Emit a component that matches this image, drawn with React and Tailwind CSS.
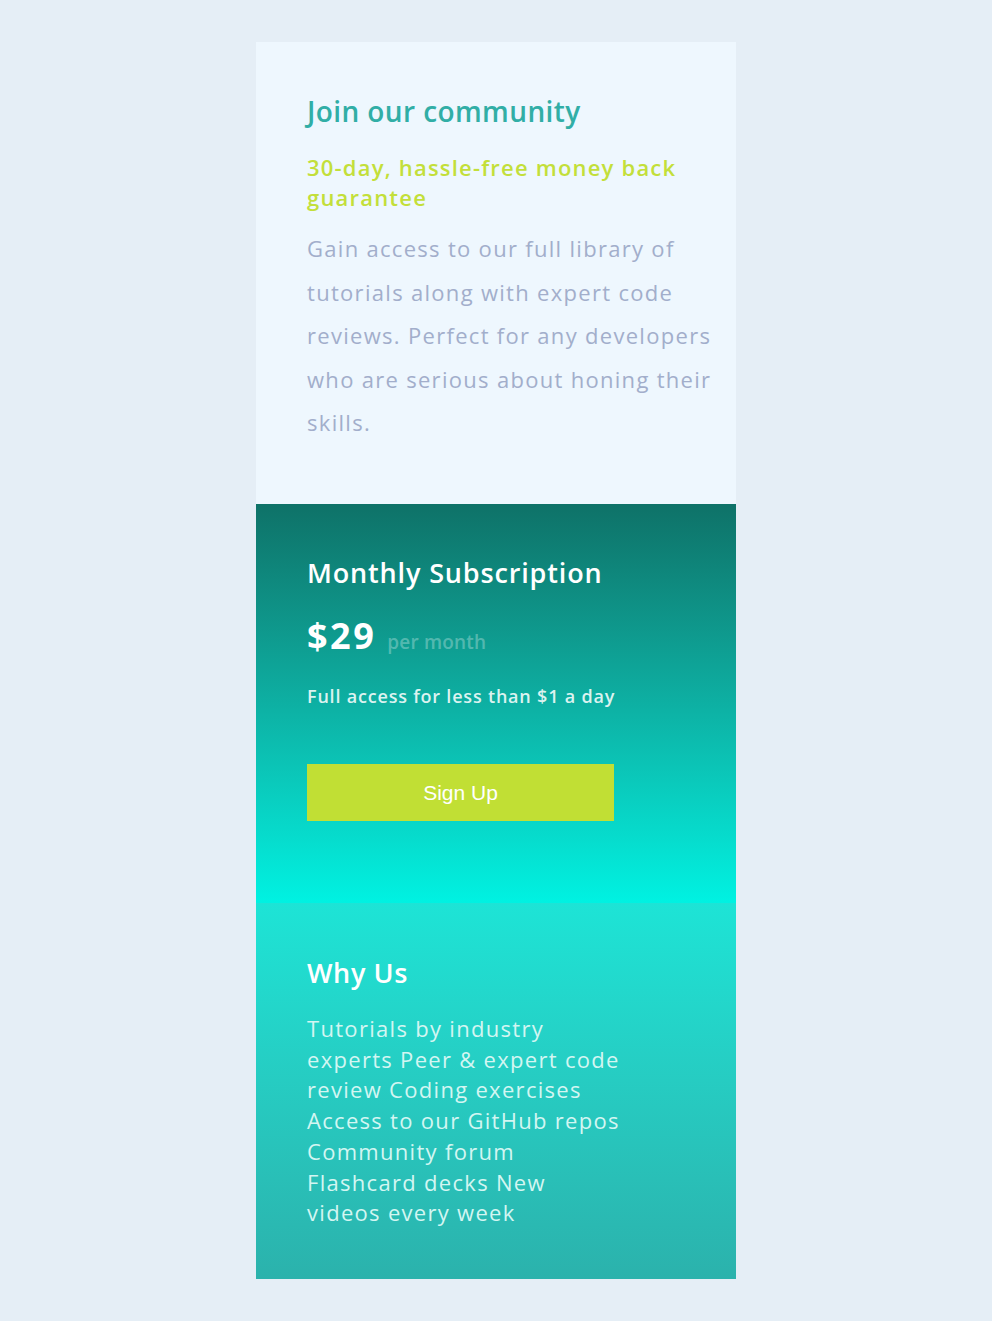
export default function App() {
  const font = { fontFamily: '"Open Sans", Lato, sans-serif' };
  return (
    <div className="min-h-[1321px] bg-[#e5eef6] pt-[42px]" style={font}>
      <div className="mx-auto w-[480px]">
        <section className="h-[462px] bg-[#eef7fe] pl-[51px] pr-[8px] pt-[51px]">
          <h1 className="text-[28px] font-semibold leading-[36px] tracking-[0.4px] text-[#31aea6] whitespace-nowrap">
            Join our community
          </h1>
          <h2 className="mt-[23px] text-[22px] font-semibold leading-[30px] tracking-[1.2px] text-[#c3df3a]">
            <span className="block whitespace-nowrap">30-day, hassle-free money back</span>
            <span className="block whitespace-nowrap">guarantee</span>
          </h2>
          <p className="mt-[15px] text-[22px] leading-[43.5px] tracking-[1.3px] text-[#a2aecb]">
            <span className="block whitespace-nowrap">Gain access to our full library of</span>
            <span className="block whitespace-nowrap">tutorials along with expert code</span>
            <span className="block whitespace-nowrap">reviews. Perfect for any developers</span>
            <span className="block whitespace-nowrap">who are serious about honing their</span>
            <span className="block whitespace-nowrap">skills.</span>
          </p>
        </section>

        <section className="h-[399px] bg-linear-to-b from-[#0e7268] to-[#00f2e2] pl-[51px] pt-[52px]">
          <h2 className="text-[27px] font-semibold leading-[34px] tracking-[0.85px] text-white whitespace-nowrap">
            Monthly Subscription
          </h2>
          <div className="mt-[26px] flex items-baseline gap-[11px]">
            <span className="text-[36px] font-bold leading-[40px] tracking-[2.5px] text-white">$29</span>
            <span className="text-[19px] font-semibold leading-[24px] tracking-[0.2px] text-white/30">per month</span>
          </div>
          <p className="mt-[27px] text-[18px] font-semibold leading-[26px] tracking-[0.8px] text-[#dbf3f0] whitespace-nowrap">
            Full access for less than $1 a day
          </p>
          <button
            className="mt-[55px] flex h-[57px] w-[307px] items-center justify-center bg-[#c1df34] text-[21px] text-white"
            style={{ fontFamily: '"Liberation Sans", Arial, sans-serif' }}
          >
            Sign Up
          </button>
        </section>

        <section className="h-[376px] bg-linear-to-b from-[#1de4d6] to-[#2bb2ac] pl-[51px] pt-[53px]">
          <h2 className="text-[27px] font-semibold leading-[34px] tracking-[0.6px] text-white">Why Us</h2>
          <p className="mt-[23px] text-[22px] leading-[30.7px] tracking-[1.3px] text-[#d3f6f2]">
            <span className="block whitespace-nowrap">Tutorials by industry</span>
            <span className="block whitespace-nowrap">experts Peer &amp; expert code</span>
            <span className="block whitespace-nowrap">review Coding exercises</span>
            <span className="block whitespace-nowrap">Access to our GitHub repos</span>
            <span className="block whitespace-nowrap">Community forum</span>
            <span className="block whitespace-nowrap">Flashcard decks New</span>
            <span className="block whitespace-nowrap">videos every week</span>
          </p>
        </section>
      </div>
    </div>
  );
}
